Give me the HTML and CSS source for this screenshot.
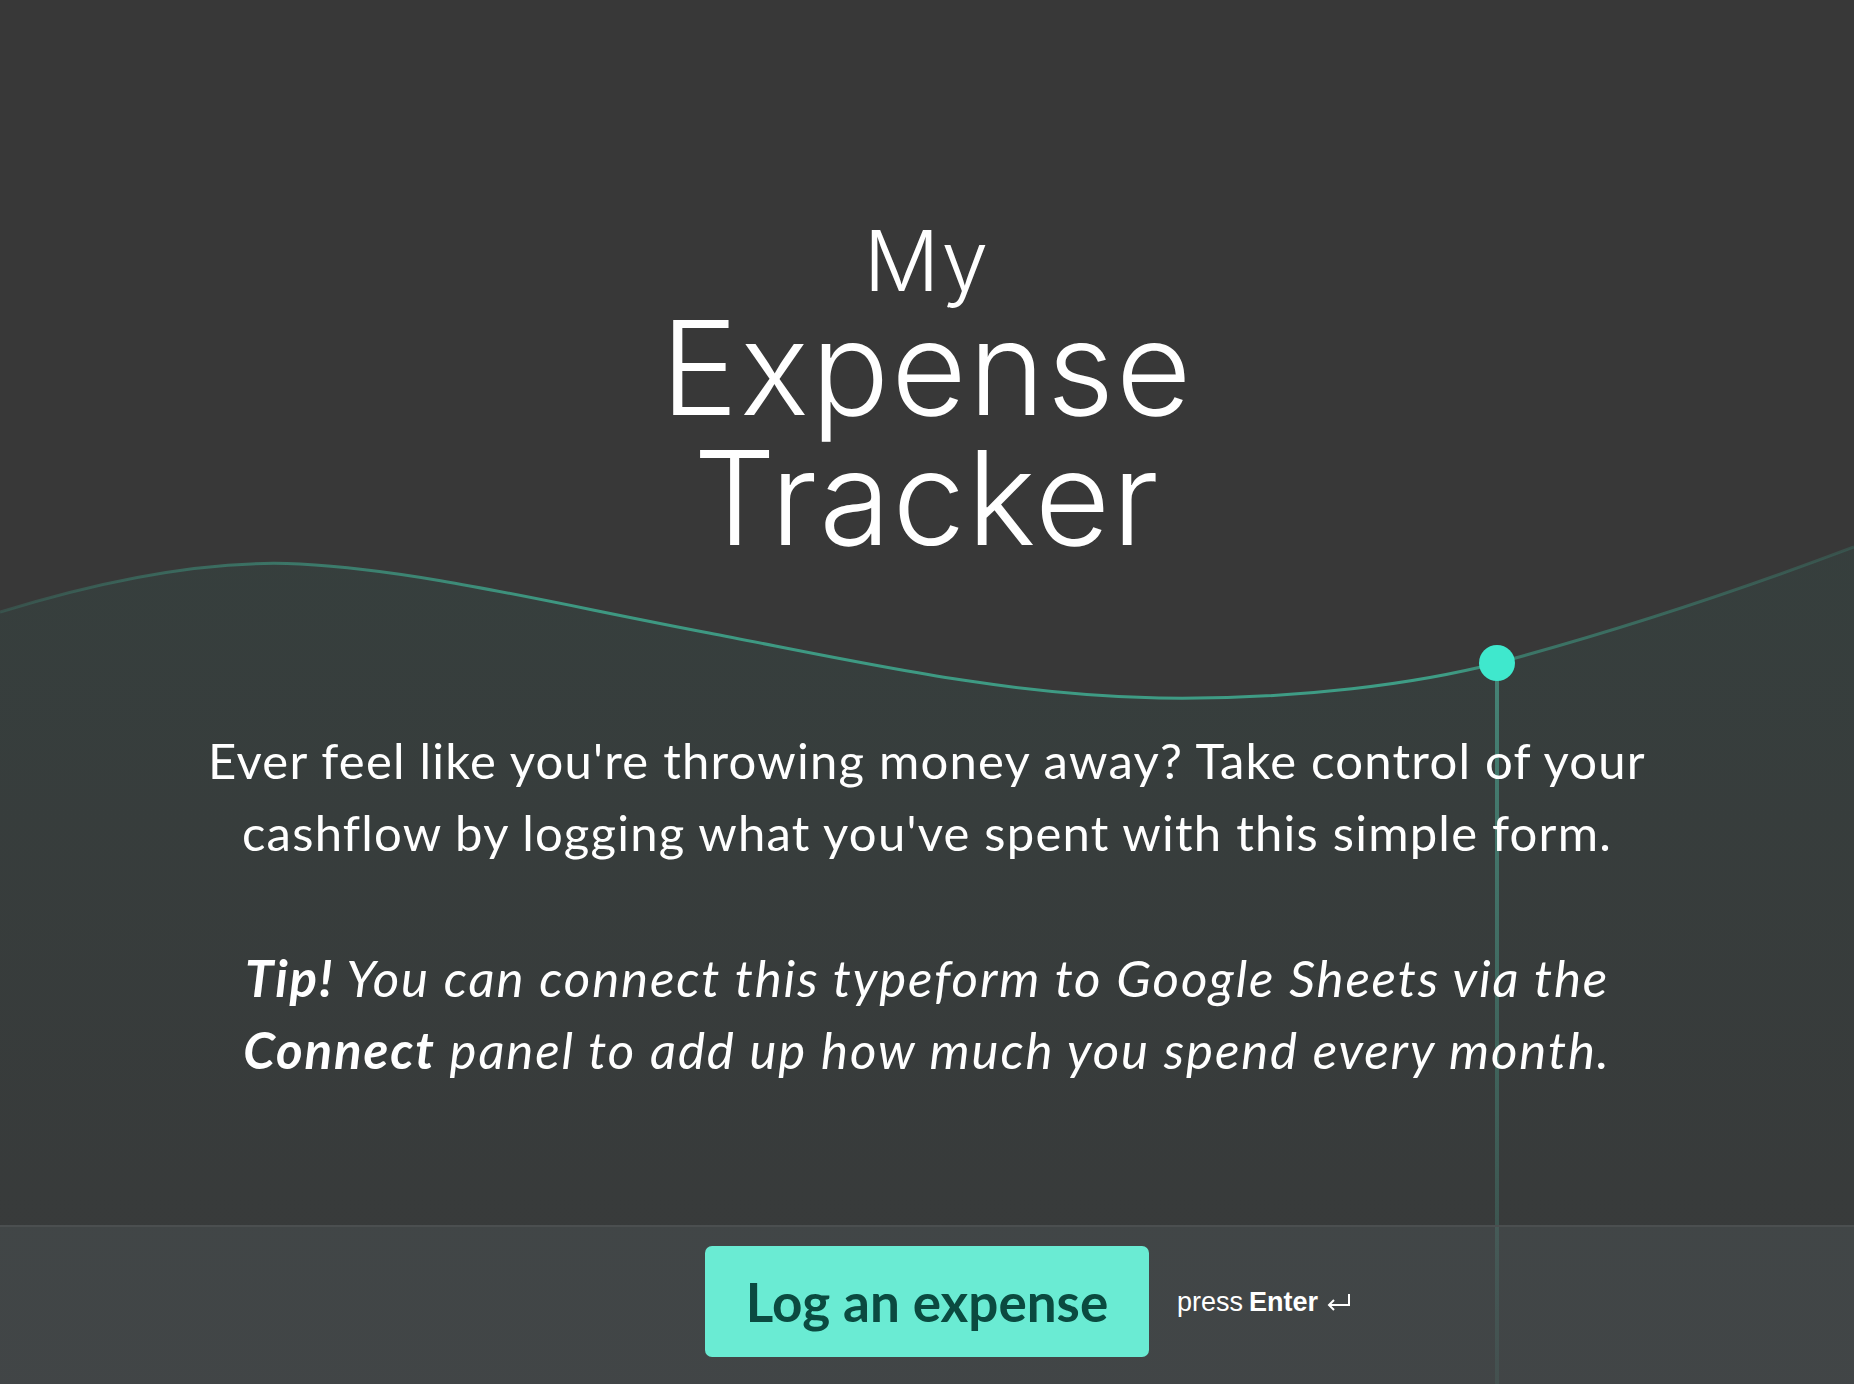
FILE: index.html
```html
<!DOCTYPE html>
<html lang="en">
<head>
    <meta charset="UTF-8">
    <meta name="viewport" content="width=device-width, initial-scale=1.0">
    <title>My Expense Tracker</title>
    <link rel="stylesheet" href="styles.css">
</head>
<body>

    <!-- Background wave -->
    <svg class="wave" viewBox="0 0 1854 1384" preserveAspectRatio="none">
        <defs>
            <linearGradient id="lineFade" x1="0" y1="0" x2="1854" y2="0" gradientUnits="userSpaceOnUse">
                <stop offset="0" stop-color="#3fa88e" stop-opacity="0.2"/>
                <stop offset="0.3" stop-color="#3fa88e" stop-opacity="0.85"/>
                <stop offset="0.78" stop-color="#3fa88e" stop-opacity="0.9"/>
                <stop offset="0.82" stop-color="#3fa88e" stop-opacity="0.55"/>
                <stop offset="1" stop-color="#3fa88e" stop-opacity="0.2"/>
            </linearGradient>
            <linearGradient id="areaFade" x1="0" y1="550" x2="0" y2="1384" gradientUnits="userSpaceOnUse">
                <stop offset="0" stop-color="#2f5a52" stop-opacity="0.2"/>
                <stop offset="1" stop-color="#3a4a4c" stop-opacity="0.12"/>
            </linearGradient>
            <linearGradient id="stemFade" x1="0" y1="663" x2="0" y2="1384" gradientUnits="userSpaceOnUse">
                <stop offset="0" stop-color="#4a9a88" stop-opacity="0.75"/>
                <stop offset="1" stop-color="#4a9a88" stop-opacity="0.15"/>
            </linearGradient>
        </defs>
        <path fill="url(#areaFade)"
              d="M0,612 C120,575 220,560 300,564 C420,570 560,605 709,633 C850,660 1000,695 1159,698 C1300,700 1420,683 1497,663 C1620,630 1740,590 1854,547 L1854,1384 L0,1384 Z"/>
        <path fill="none" stroke="url(#lineFade)" stroke-width="3"
              d="M0,612 C120,575 220,560 300,564 C420,570 560,605 709,633 C850,660 1000,695 1159,698 C1300,700 1420,683 1497,663 C1620,630 1740,590 1854,547"/>
        <line x1="1497" y1="663" x2="1497" y2="1384" stroke="url(#stemFade)" stroke-width="4"/>
        <circle cx="1497" cy="663" r="18" fill="#3fe8cd"/>
    </svg>

    <main class="welcome">
        <h1 class="title">
            <span class="title-small">My</span>
            <span class="title-big">Expense</span>
            <span class="title-big">Tracker</span>
        </h1>

        <p class="intro">
            Ever feel like you're throwing money away? Take control of your<br>
            cashflow by logging what you've spent with this simple form.
        </p>

        <p class="tip">
            <strong>Tip!</strong> You can connect this typeform to Google Sheets via the<br>
            <strong>Connect</strong> panel to add up how much you spend every month.
        </p>
    </main>

    <footer class="action-bar">
        <button class="btn-start">Log an expense</button>
        <div class="hint">
            press <b>Enter</b>
            <svg class="enter-icon" viewBox="0 0 26 20" width="26" height="20">
                <path d="M23 1 V12 H3 M8 7 L3 12 L8 17" fill="none" stroke="#fff" stroke-width="2"/>
            </svg>
        </div>
    </footer>

</body>
</html>
```

FILE: styles.css
```css
body {
    margin: 0;
    padding: 0;
    height: 1384px;
    overflow: hidden;
    position: relative;
    background-color: #383838;
    color: #fff;
    font-family: Lato, "Open Sans", sans-serif;
}

.wave {
    position: absolute;
    top: 0;
    left: 0;
    width: 100%;
    height: 100%;
    z-index: 0;
}

.welcome {
    position: relative;
    z-index: 1;
    height: 1225px;
    box-sizing: border-box;
    padding-top: 219px;
    text-align: center;
}

.title {
    margin: 0;
    font-family: Inter, "Noto Sans", sans-serif;
    font-weight: 300;
    letter-spacing: 0.06em;
}

.title-small {
    display: block;
    font-size: 84px;
    line-height: 84px;
}

.title-big {
    display: block;
    font-size: 130px;
    line-height: 130px;
}

.intro, .tip {
    line-height: 72px;
    margin: 0;
    white-space: nowrap;
}

.intro {
    margin-top: 161px;
    font-size: 49px;
    letter-spacing: 0.025em;
}

.tip {
    margin-top: 74px;
    font-size: 51px;
    letter-spacing: 0.037em;
    font-style: italic;
}

.tip strong {
    font-weight: 700;
}

.action-bar {
    position: relative;
    z-index: 1;
    height: 159px;
    box-sizing: border-box;
    border-top: 2px solid #4b4f50;
    background-color: rgba(100, 110, 112, 0.22);
    display: grid;
    grid-template-columns: 1fr auto 1fr;
    align-items: center;
}

.btn-start {
    grid-column: 2;
    width: 444px;
    height: 111px;
    margin-top: -8px;
    border: none;
    border-radius: 7px;
    background-color: #6aebd3;
    color: #0b4a40;
    font-family: Lato, sans-serif;
    font-weight: 700;
    font-size: 53px;
    cursor: pointer;
}

.hint {
    justify-self: start;
    margin-left: 28px;
    margin-top: -6px;
    font-family: "Liberation Sans", Arial, sans-serif;
    font-size: 27px;
    color: #fff;
    display: flex;
    align-items: center;
    gap: 8px;
}

.hint b {
    margin-left: -2px;
}
```
